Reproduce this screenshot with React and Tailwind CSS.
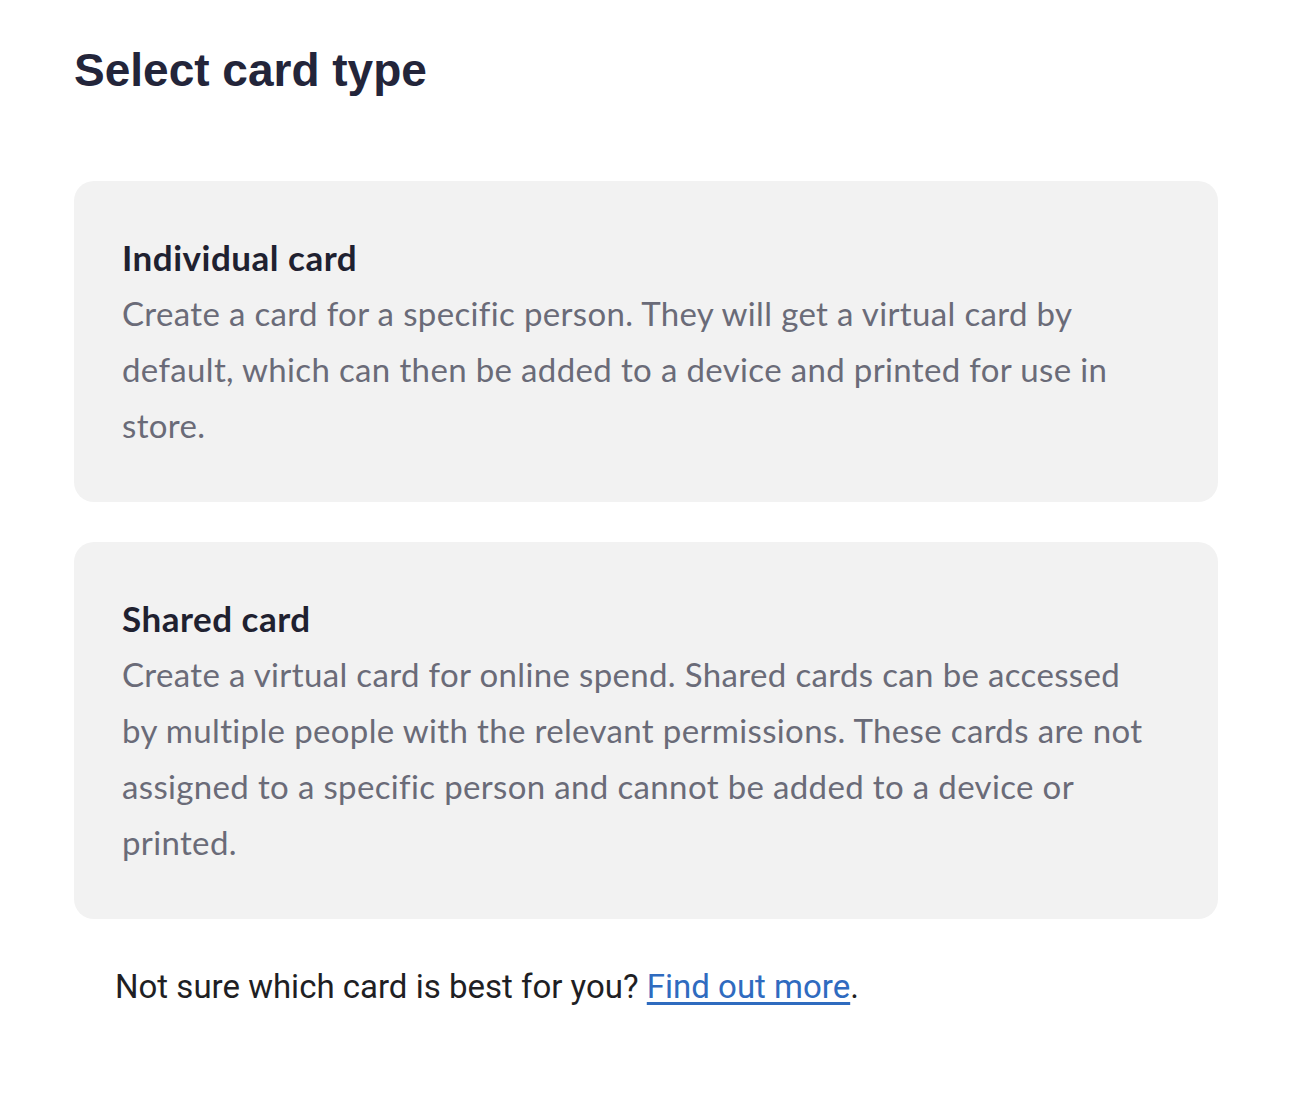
function OptionCard({ title, lines }) {
  return (
    <button
      type="button"
      className="w-full text-left rounded-[20px] bg-[#f2f2f2] px-12 pt-[56px] pb-[49px]"
    >
      <h2 className="text-[35px] leading-[40px] font-bold tracking-[0.5px] text-[#1f2130] font-['Lato',sans-serif]">
        {title}
      </h2>
      <p className="mt-[8px] text-[33px] leading-[56px] tracking-[0.35px] text-[#6a6b78] font-['Lato',sans-serif]">
        {lines.map((line, i) => (
          <span key={i} className="block whitespace-nowrap">
            {line}
          </span>
        ))}
      </p>
    </button>
  );
}

export default function App() {
  return (
    <div className="min-h-screen bg-white px-[74px] pt-[40px]">
      <h1 className="text-[46px] leading-[60px] font-bold text-[#23253a] font-['Liberation_Sans',sans-serif]">
        Select card type
      </h1>

      <div className="mt-[81px] w-[1144px] flex flex-col gap-[40px]">
        <OptionCard
          title="Individual card"
          lines={[
            "Create a card for a specific person. They will get a virtual card by",
            "default, which can then be added to a device and printed for use in",
            "store.",
          ]}
        />

        <OptionCard
          title="Shared card"
          lines={[
            "Create a virtual card for online spend. Shared cards can be accessed",
            "by multiple people with the relevant permissions. These cards are not",
            "assigned to a specific person and cannot be added to a device or",
            "printed.",
          ]}
        />
      </div>

      <p className="mt-[48px] pl-[41px] text-[33px] leading-[40px] text-[#1f1f24] font-['Roboto',sans-serif]">
        Not sure which card is best for you?{" "}
        <a href="#" className="text-[#2f6bbf] underline underline-offset-4">
          Find out more
        </a>
        .
      </p>
    </div>
  );
}
